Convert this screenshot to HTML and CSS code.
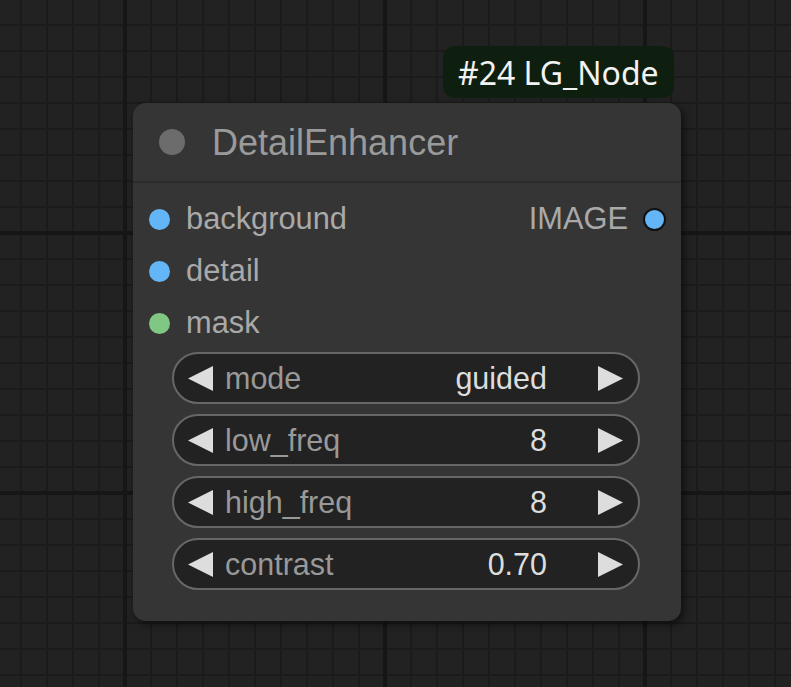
FILE: index.html
```html
<!DOCTYPE html>
<html>
<head>
<meta charset="utf-8">
<link rel="stylesheet" href="styles.css">
</head>
<body>
<div class="canvas">
  <div class="node">
    <div class="node-title">
      <span class="title-dot"></span>
      <span class="title-text">DetailEnhancer</span>
    </div>
    <div class="node-body">
      <div class="slot-row">
        <div class="slot in"><span class="dot blue"></span><span class="slot-label">background</span></div>
        <div class="slot out"><span class="slot-label">IMAGE</span><span class="dot blue outline"></span></div>
      </div>
      <div class="slot-row">
        <div class="slot in"><span class="dot blue"></span><span class="slot-label">detail</span></div>
      </div>
      <div class="slot-row">
        <div class="slot in"><span class="dot green"></span><span class="slot-label">mask</span></div>
      </div>
      <div class="widgets">
        <div class="widget">
          <svg class="arrow" viewBox="0 0 25 25"><polygon points="25,0 25,25 0,12.5"/></svg>
          <span class="w-label">mode</span>
          <span class="w-value">guided</span>
          <svg class="arrow right" viewBox="0 0 25 25"><polygon points="0,0 0,25 25,12.5"/></svg>
        </div>
        <div class="widget">
          <svg class="arrow" viewBox="0 0 25 25"><polygon points="25,0 25,25 0,12.5"/></svg>
          <span class="w-label">low_freq</span>
          <span class="w-value">8</span>
          <svg class="arrow right" viewBox="0 0 25 25"><polygon points="0,0 0,25 25,12.5"/></svg>
        </div>
        <div class="widget">
          <svg class="arrow" viewBox="0 0 25 25"><polygon points="25,0 25,25 0,12.5"/></svg>
          <span class="w-label">high_freq</span>
          <span class="w-value">8</span>
          <svg class="arrow right" viewBox="0 0 25 25"><polygon points="0,0 0,25 25,12.5"/></svg>
        </div>
        <div class="widget">
          <svg class="arrow" viewBox="0 0 25 25"><polygon points="25,0 25,25 0,12.5"/></svg>
          <span class="w-label">contrast</span>
          <span class="w-value">0.70</span>
          <svg class="arrow right" viewBox="0 0 25 25"><polygon points="0,0 0,25 25,12.5"/></svg>
        </div>
      </div>
    </div>
  </div>
  <div class="badge">#24 LG_Node</div>
</div>
</body>
</html>
```
FILE: styles.css
```css
html, body {
  margin: 0;
  padding: 0;
}
body {
  width: 791px;
  height: 687px;
  overflow: hidden;
  background-color: #222222;
  font-family: "Liberation Sans", Arial, sans-serif;
}
.canvas {
  position: relative;
  width: 791px;
  height: 687px;
  background-image:
    linear-gradient(to right, #161616 4px, transparent 4px),
    linear-gradient(to bottom, #161616 4px, transparent 4px),
    linear-gradient(to right, #1b1b1b 2px, transparent 2px),
    linear-gradient(to bottom, #1b1b1b 2px, transparent 2px);
  background-size: 260px 260px, 260px 260px, 26px 26px, 26px 26px;
  background-position: 123px 0, 0 231px, 20px 0, 0 24px;
}
.node {
  position: absolute;
  left: 133px;
  top: 103px;
  width: 548px;
  height: 518px;
  background: #353535;
  border-radius: 13px;
  box-shadow: 3px 3px 8px rgba(0, 0, 0, 0.55);
  display: flex;
  flex-direction: column;
}
.node-title {
  height: 78px;
  border-bottom: 2px solid #2b2b2b;
  display: flex;
  align-items: center;
  padding-left: 26px;
}
.title-dot {
  width: 26px;
  height: 26px;
  border-radius: 50%;
  background: #6c6c6c;
  flex: none;
}
.title-text {
  margin-left: 27px;
  font-size: 36px;
  color: #9a9a9a;
  position: relative;
  top: 1px;
}
.node-body {
  padding-top: 10px;
  display: flex;
  flex-direction: column;
}
.slot-row {
  height: 52px;
  display: flex;
  align-items: center;
  justify-content: space-between;
  padding: 0 15px 0 16px;
}
.slot {
  display: flex;
  align-items: center;
}
.slot-label {
  font-size: 30.8px;
  color: #a9a9a9;
}
.in .slot-label {
  margin-left: 16px;
}
.out .slot-label {
  margin-right: 15px;
}
.dot {
  width: 21px;
  height: 21px;
  border-radius: 50%;
  box-sizing: border-box;
  flex: none;
}
.dot.blue { background: #64b5f6; }
.dot.green { background: #81c784; }
.dot.outline {
  width: 23px;
  height: 23px;
  border: 2px solid #111;
}
.widgets {
  margin-top: 3px;
  padding: 0 41px 0 39px;
  display: flex;
  flex-direction: column;
  gap: 10px;
}
.widget {
  height: 52px;
  box-sizing: border-box;
  border: 2px solid #676767;
  border-radius: 26px;
  background: #222222;
  display: flex;
  align-items: center;
  padding: 0 15px 0 14px;
  font-size: 30.5px;
}
.arrow {
  width: 25px;
  height: 25px;
  fill: #dddddd;
  flex: none;
}
.w-label {
  margin-left: 12px;
  color: #999999;
}
.w-value {
  margin-left: auto;
  margin-right: 51px;
  color: #dddddd;
}
.badge {
  position: absolute;
  left: 443px;
  top: 46px;
  height: 52px;
  padding: 0 15px;
  border-radius: 12px;
  background: #0e1f0f;
  color: #f2f2f2;
  font-family: "Noto Sans", sans-serif;
  font-size: 32px;
  display: flex;
  align-items: center;
}
```
